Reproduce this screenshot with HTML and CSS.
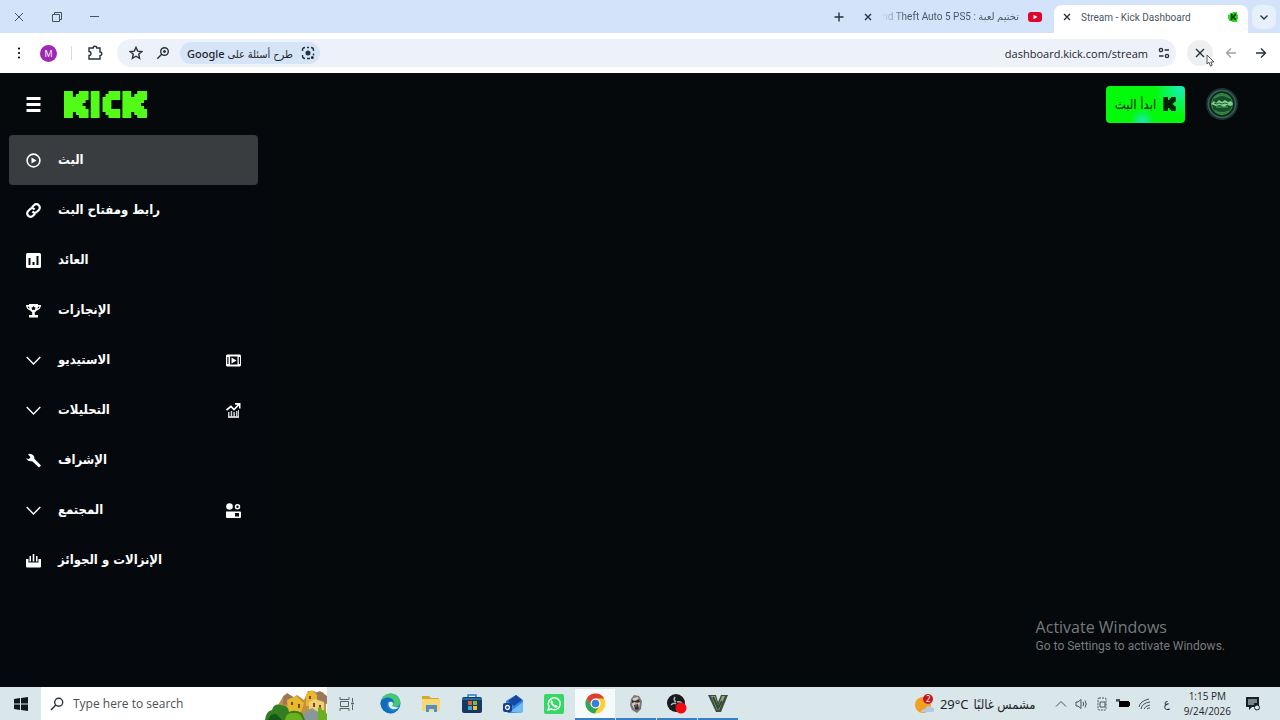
FILE: index.html
```html
<!DOCTYPE html>
<html lang="ar">
<head>
<meta charset="utf-8">
<title>Stream - Kick Dashboard</title>
<link rel="stylesheet" href="styles.css">
</head>
<body>
<div class="tabstrip">
  <div class="window-controls">
    <button class="plain" aria-label="Close window"><svg width="12" height="12" viewBox="0 0 12 12" class="thin"><path d="M2 2l8 8M10 2l-8 8"/></svg></button>
    <button class="plain" aria-label="Restore"><svg width="12" height="12" viewBox="0 0 12 12" class="thin"><path d="M1.500 3.500h7v7h-7zM3.500 3.500v-2h7v7h-2"/></svg></button>
    <button class="plain" aria-label="Minimize"><svg width="12" height="12" viewBox="0 0 12 12" class="thin"><path d="M1 5.500h9"/></svg></button>
  </div>
  <button class="plain new-tab" aria-label="New tab"><svg width="12" height="12" viewBox="0 0 12 12" class="line"><path d="M6 1.500v9M1.500 6h9"/></svg></button>
  <div class="tab">
    <button class="plain" aria-label="Close tab"><svg width="10" height="10" viewBox="0 0 10 10" class="line"><path d="M2 2l6 6M8 2l-6 6"/></svg></button>
    <span class="tab-title fade" dir="rtl">تختيم لعبة : Grand Theft Auto 5 PS5</span>
    <svg width="14" height="10" viewBox="0 0 14 10"><rect width="14" height="10" rx="3" fill="#e0032c"/><path d="M5.500 2.800v4.400L9.500 5z" fill="#fff"/></svg>
  </div>
  <div class="tab active">
    <button class="plain" aria-label="Close tab"><svg width="10" height="10" viewBox="0 0 10 10" class="line"><path d="M2 2l6 6M8 2l-6 6"/></svg></button>
    <span class="tab-title">Stream - Kick Dashboard</span>
    <svg width="10" height="10" viewBox="0 0 11 11"><path d="M5 0h5v3h1v5h-1v3H4v-1H1V8H0V3h2V1h3z" fill="#2fdc20"/><path d="M3 2v7h2V7h1v1h1v1h2V7H8V6H7V5h1V4h1V2H7v1H6v1H5V2z" fill="#073d08"/></svg>
  </div>
  <button class="plain tab-search" aria-label="Search tabs"><svg width="10" height="10" viewBox="0 0 10 10" class="line"><path d="M1.500 3.500L5 7l3.500-3.500"/></svg></button>
</div>

<div class="toolbar">
  <button class="plain menu-dots" aria-label="Menu"><svg width="4" height="14" viewBox="0 0 4 14"><circle cx="2" cy="2.500" r="1.100"/><circle cx="2" cy="7" r="1.100"/><circle cx="2" cy="11.500" r="1.100"/></svg></button>
  <button class="plain profile">M</button>
  <span class="divider"></span>
  <button class="plain extensions" aria-label="Extensions"><svg width="16" height="16" viewBox="0 0 16 16" class="line"><path d="M2 3h4.200a1.800 1.800 0 0 1 3.600 0H13v4a1.800 1.800 0 0 1 0 3.600V14H2v-3.500a2 2 0 0 0 0-4z"/></svg></button>
  <div class="address">
    <button class="plain" aria-label="Bookmark"><svg width="14" height="14" viewBox="0 0 14 14" class="line"><path d="M7 1.300l1.700 3.800 4.100.400-3.100 2.700.9 4.100L7 10.200l-3.600 2.100.9-4.100L1.200 5.500l4.100-.4z"/></svg></button>
    <button class="plain zoom-button" aria-label="Zoom"><svg width="14" height="14" viewBox="0 0 14 14" class="line"><circle cx="8.500" cy="5.500" r="3.800"/><path d="M5.700 8.300L1.300 12.700M8.500 4v3M7 5.500h3"/></svg></button>
    <button class="plain lens"><span dir="rtl">طرح أسئلة على Google</span><svg width="14" height="14" viewBox="0 0 14 14" class="line"><path d="M4 1.500C2.200 1.500 1.500 2.500 1.500 4v1M10 1.500c1.800 0 2.500 1 2.500 2.500v1M4 12.500c-1.800 0-2.500-1-2.500-2.500V9M6 12.500h3M12.500 7.500v2M6 1.500h2"/><circle cx="7" cy="7" r="1.800" fill="#26364c"/><circle cx="11.300" cy="11.500" r=".8" fill="#26364c"/></svg></button>
    <input class="url" type="text" aria-label="Address" value="dashboard.kick.com/stream">
    <button class="plain" aria-label="Site settings"><svg width="12" height="12" viewBox="0 0 12 12" class="line"><circle cx="3" cy="3" r="1.600"/><path d="M6.500 3H11M1 9h4.500"/><circle cx="9" cy="9" r="1.600"/></svg></button>
  </div>
  <button class="plain stop" aria-label="Stop loading"><svg width="12" height="12" viewBox="0 0 12 12" class="line"><path d="M2 2l8 8M10 2l-8 8"/></svg><svg class="pointer" width="9" height="13" viewBox="0 0 9 13"><path d="M1 1v9l2-1.700L4.500 12l1.700-.7L4.800 8H8z" fill="#fff" stroke="#555"/></svg></button>
  <button class="plain forward" aria-label="Forward"><svg width="12" height="12" viewBox="0 0 12 12" class="line"><path d="M11 6H1.500M6 1.500L1.500 6 6 10.500"/></svg></button>
  <button class="plain" aria-label="Back"><svg width="12" height="12" viewBox="0 0 12 12" class="line"><path d="M1 6h9.500M6 1.500L10.500 6 6 10.500"/></svg></button>
</div>

<div class="app">
  <header class="header">
    <button class="plain" aria-label="Toggle menu"><svg width="15" height="15" viewBox="0 0 15 15" fill="#fff"><rect x=".5" y="0" width="14" height="3" rx=".5"/><rect x=".5" y="6" width="14" height="3" rx=".5"/><rect x=".5" y="12" width="14" height="3" rx=".5"/></svg></button>
    <a class="logo" href="#" aria-label="Kick"><svg width="83" height="27" viewBox="0 0 28 9" preserveAspectRatio="none" fill="#53fc18"><path id="block-k" d="M0 0h3v2h1V1h1V0h3.300v3H7.300v1h-1v1h1v1h1v3H5V8H4V7H3v2H0z"/><rect x="9" width="3" height="9"/><path d="M15 0h4v3h-3v3h3v3h-4V8h-1V7h-1V2h1V1h1z"/><use href="#block-k" x="19.700"/></svg></a>
    <button class="go-live"><span dir="rtl">ابدأ البث</span><svg width="13" height="14" viewBox="0 0 8 9" fill="#04210a"><path d="M0 0h3v2h1V1h1V0h3v3H7v1H6v1h1v1h1v3H5V8H4V7H3v2H0z"/></svg></button>
    <button class="plain avatar" aria-label="Account"><svg width="34" height="34" viewBox="0 0 34 34"><circle cx="17" cy="17" r="16" fill="#17352f"/><circle cx="17" cy="17" r="13.500" fill="#13251f" stroke="#3d6053" stroke-width="1.500"/><circle cx="17" cy="17" r="10.500" fill="#174a28" stroke="#2f9150"/><path d="M9 11q8-6 16 0M10 24q7 4 14 0" stroke="#2b8a45" fill="none" stroke-width="2"/><path d="M6 17l3-3 2 2 3-3 3 2 3-2 3 2 3-1 2 3-2 2-4-1-3 2-4-2-4 1z" fill="#85cf8e"/><path d="M9 16l3 1 2-1 3 1 3-1 3 1" stroke="#1c6133" fill="none"/><path d="M11 20h12" stroke="#4da565"/></svg></button>
  </header>
  <div class="content">
    <nav class="sidebar">
      <a class="item selected" href="#"><svg class="icon" viewBox="0 0 15 15"><circle cx="7.500" cy="7.500" r="6.400" fill="none" stroke="#fff" stroke-width="1.600"/><path d="M5.500 4.500v6l5-3z"/></svg><span class="label" dir="rtl">البث</span></a>
      <a class="item" href="#"><svg class="icon" viewBox="0 0 15 15"><g fill="none" stroke="#fff" stroke-width="2.200"><path d="M6 4.200l2-2a3.300 3.300 0 0 1 4.800 4.800L11 8.800a3.300 3.300 0 0 1-4.600-.2"/><path d="M9 10.800l-2 2A3.300 3.300 0 0 1 2.200 8L4 6.200a3.300 3.300 0 0 1 4.600.2"/></g></svg><span class="label" dir="rtl">رابط ومفتاح البث</span></a>
      <a class="item" href="#"><svg class="icon" viewBox="0 0 15 15"><path fill-rule="evenodd" d="M1.500 0h12Q15 0 15 1.500v12q0 1.500-1.500 1.500h-12Q0 15 0 13.500v-12Q0 0 1.500 0zM2.500 5v7h2V5zM6.500 9v3h2V9zM10.500 3v9h2V3z"/></svg><span class="label" dir="rtl">العائد</span></a>
      <a class="item" href="#"><svg class="icon" viewBox="0 0 15 15"><path fill-rule="evenodd" d="M3 1h9v1h3q0 4-4.500 5.800Q9.500 9 8.800 9.300V12H12v2.500H3V12h3.200V9.300Q5.500 9 4.500 7.800 0 6 0 2h3zM1.500 3.700q.5 1.500 2 2.100L3 3.700zM13.500 3.700H12l-.5 2.100q1.500-.6 2-2.100zM7.500 3l-.8 1.300-1.500.4 1 1.200-.1 1.400 1.400-.6 1.400.6-.1-1.400 1-1.200-1.500-.4z"/></svg><span class="label" dir="rtl">الإنجازات</span></a>
      <button class="item"><svg class="icon" viewBox="0 0 15 15"><path d="M.7 4l6.800 7 6.800-7" fill="none" stroke="#fff" stroke-width="1.400"/></svg><span class="label" dir="rtl">الاستيديو</span><svg class="icon" viewBox="0 0 15 15"><path fill-rule="evenodd" d="M1 1.500h13l1 1v10l-1 1H1l-1-1v-10zM4 3.500v8h7.500v-8zM1.300 4v7h1.200V4zM12.800 4v7H14V4z"/><path d="M5.500 4.500v6l5-3z"/></svg></button>
      <button class="item"><svg class="icon" viewBox="0 0 15 15"><path d="M.7 4l6.800 7 6.800-7" fill="none" stroke="#fff" stroke-width="1.400"/></svg><span class="label" dir="rtl">التحليلات</span><svg class="icon" viewBox="0 0 15 15"><path d="M.5 7L5 3.500l3 3 5-5" fill="none" stroke="#fff" stroke-width="1.700"/><path d="M9 0h5.500v5.500H13V2.500L9 1.500z"/><path d="M2 9h1.500v6H2zM4.700 8h1.500v7H4.700zM7.400 9h1.500v6H7.400zM10 8h1.500v7H10zM12 7h1v8h-1zM2 13h11v2H2z" fill="#ccc"/></svg></button>
      <a class="item" href="#"><svg class="icon" viewBox="0 0 15 15"><path d="M2 1.200Q5 0 7.500 2.500q1.200 1.500.8 3.300L15 12.500 13 14.500 6.200 8.200Q2.500 9 0 5.500l2.800.6L4.500 4.300z"/></svg><span class="label" dir="rtl">الإشراف</span></a>
      <button class="item"><svg class="icon" viewBox="0 0 15 15"><path d="M.7 4l6.800 7 6.800-7" fill="none" stroke="#fff" stroke-width="1.400"/></svg><span class="label" dir="rtl">المجتمع</span><svg class="icon" viewBox="0 0 15 15"><circle cx="3.500" cy="3.500" r="3.300"/><circle cx="11.500" cy="3.700" r="2" fill="none" stroke="#fff" stroke-width="1.500"/><path fill-rule="evenodd" d="M0 8.500h14q1 0 1 1v4.500q0 1-1 1H1q-1 0-1-1zM9 10v3.500h4V10z"/></svg></button>
      <a class="item" href="#"><svg class="icon" viewBox="0 0 15 15"><path d="M0 6h2.500v3.500h10V6H15v7.500q0 1-1 1H1q-1 0-1-1zM3.500 3H5v5.500H3.500zM6.700 1h1.600v7.500H6.700zM10 3h1.500v5.500H10z"/></svg><span class="label" dir="rtl">الإنزالات و الجوائز</span></a>
    </nav>
    <main class="main">
      <div class="activation" lang="en"><p class="activation-title">Activate Windows</p><p class="activation-text">Go to Settings to activate Windows.</p></div>
    </main>
  </div>
</div>

<footer class="taskbar">
  <button class="plain start" aria-label="Start"><svg width="14" height="14" viewBox="0 0 14 14" fill="#101820"><path d="M0 2l6-1v5.500H0zM7 .9L14 0v6.500H7zM0 7.500h6V13l-6-1zM7 7.500h7V14l-7-1z"/></svg></button>
  <label class="search">
    <svg width="14" height="14" viewBox="0 0 14 14" class="line"><circle cx="8.700" cy="5.200" r="4"/><path d="M5.800 8L1 13"/></svg>
    <input type="text" placeholder="Type here to search" aria-label="Type here to search">
    <svg width="62" height="30" viewBox="0 0 62 30"><path d="M13 15l6-10 7 4 6-4 7 5 4-9h6l3 2 6-1 3 6v22H20z" fill="#c29040"/><path d="M18 7l4-4 8 5-3 6-9 1zM50 3l5-2 7 5v8l-10-3z" fill="#9c785a"/><path d="M22 10l9-4 8 7-4 12H23zM41 4l6-4 5 5v11H41z" fill="#e8b92f"/><path d="M44 12l6-3 9 3v10H44z" fill="#f1cf7a"/><path d="M40 22l7-4 6 4v8H38z" fill="#8b9698"/><path d="M26 12h2v3h-2zM33 14h2v4h-2zM44 6h2v3h-2zM48 13h2v4h-2zM54 15h2v4h-2z" fill="#774717"/><path d="M0 30q1-9 7-10 2-7 9-5 8 1 8 7 6-3 13 1l3 7z" fill="#317f20"/><path d="M20 30q1-8 8-7 7-2 10 7zM53 30V18q3-3 4 2 3 0 5 4v6z" fill="#69af20"/><path d="M3 30q2-7 8-6l6 6z" fill="#14591a"/></svg>
  </label>
  <button class="plain task-view" aria-label="Task view"><svg width="16" height="14" viewBox="0 0 16 14" fill="none" stroke="#59646a"><path d="M1 0v2.500h9V0M1 14v-2.500h9V14M1.500 4.500h8v5h-8zM13.500 1v4M13.500 8v5"/><path d="M12.500 6h2v1h-2z" fill="#59646a"/></svg></button>
  <div class="apps">
    <button class="task" aria-label="Edge"><svg width="21" height="21" viewBox="0 0 21 21"><circle cx="10.500" cy="10.500" r="10" fill="#1780d2"/><path d="M1 8C3 2 8 0 12 .6c6 .5 9 6 8 10-1 4-6 4-8 3 3-3 0-7-4-7-3 0-5 1-7 1.400z" fill="#44c878"/><path d="M1 8q4-5 9-3 4 1 4 5-3-4-6-1-3 5 2 9 4 2 8-2-3 5-9 4Q2 19 .5 11z" fill="#126cbb"/><path d="M8.500 10q1-2 3.500-1 2 2 0 4 3 2 7 1-3 3-7 2-4-2-3.500-6z" fill="#e4f1f3"/></svg></button>
    <button class="task" aria-label="File Explorer"><svg width="20" height="18" viewBox="0 0 20 18"><path d="M1 1h7l2 2h8v3H1z" fill="#d8a72a"/><path d="M1 4h18v12H1z" fill="#f7d774"/><path d="M5 17v-7h11v7h-3v-3H8v3z" fill="#528ecb"/></svg></button>
    <button class="task" aria-label="Store"><svg width="20" height="20" viewBox="0 0 20 20"><path d="M6 4V1h8v3" fill="none" stroke="#2780c4" stroke-width="1.500"/><rect y="3" width="20" height="16" rx="2" fill="#173961"/><path d="M0 4h20v2H0z" fill="#2368a6"/><path d="M6 7h4v4H6z" fill="#ee5735"/><path d="M11 7h4v4h-4z" fill="#80be32"/><path d="M6 12h4v4H6z" fill="#2ba8e6"/><path d="M11 12h4v4h-4z" fill="#f4bf2b"/></svg></button>
    <button class="task" aria-label="Outlook"><svg width="21" height="20" viewBox="0 0 21 20"><path d="M3 7l10-6 7 5v11l-3 2H5l-2-2z" fill="#3185de"/><path d="M5 7l8-6 6 5-8 6z" fill="#1748a5"/><path d="M7 18l13-10v10l-2 1z" fill="#70bcf2"/><rect y="9" width="9" height="9" rx="2" fill="#123f91"/><circle cx="4.500" cy="13.500" r="2" fill="none" stroke="#fff" stroke-width="1.300"/></svg></button>
    <button class="task" aria-label="WhatsApp"><svg width="20" height="20" viewBox="0 0 20 20"><rect width="20" height="20" rx="2" fill="#35d765"/><path d="M4 16l1-3.500a6 6 0 1 1 2.500 2.500z" fill="none" stroke="#fff" stroke-width="1.400"/><path d="M7.500 6l1.500 2-.7 1 2.500 2.500 1-.8 2 1.500q-1 2-3 1.200Q7 11.500 6.500 8q0-1 1-2z" fill="#fff"/></svg></button>
    <button class="task running current" aria-label="Chrome"><svg width="21" height="21" viewBox="0 0 21 21"><circle cx="10.500" cy="10.500" r="10" fill="#ffce34"/><path d="M1.800 5.500A10 10 0 0 1 19.200 5.500H10.500L6.200 13z" fill="#df3e32"/><path d="M1.800 5.500a10 10 0 0 0 7.700 15L14.500 13l-8.300 0z" fill="#30a653"/><circle cx="10.500" cy="10.500" r="5" fill="#fff"/><circle cx="10.500" cy="10.500" r="3.800" fill="#347fde"/></svg></button>
    <button class="task running" aria-label="Game"><svg width="14" height="18" viewBox="0 0 14 18"><path d="M2 4l3-4 5 1 3 5-1 8-4 4-5-3-2-5z" fill="#777"/><path d="M4 3l5-1 2 5-1 6-4 2-3-5z" fill="#d7c8bd"/><path d="M3 5l3 1 4-2 1 3-3 1-2-1-3 1zM5 10l4-1 1 5-4 1z" fill="#35312f"/><path d="M7 7v5" stroke="#a88168"/></svg></button>
    <button class="task running" aria-label="Recorder"><svg width="20" height="20" viewBox="0 0 20 20"><circle cx="9" cy="9" r="9" fill="#171a1c"/><path d="M8 3q-2 3 1 5M4 11q3-3 5-1M10 8q3-1 5 1" fill="none" stroke="#b5b5b5" stroke-width="1.500"/><circle cx="14" cy="14" r="5.500" fill="#f10b12"/></svg></button>
    <button class="task running" aria-label="Grand Theft Auto V"><svg width="20" height="17" viewBox="0 0 20 17"><path d="M0 0h8l2 7 3-7h7l-7 17H8z" fill="#404945"/><path d="M3 1h4l3 10 4-10h3l-6 14H9z" fill="#87a970"/><path d="M5 2l5 11 4-7" fill="none" stroke="#294e2f" stroke-width="2"/></svg></button>
  </div>
  <button class="plain weather"><svg width="20" height="20" viewBox="0 0 20 20"><circle cx="8" cy="11" r="8" fill="#f2a022"/><path d="M6 18q0-3 4-3 2-5 6-2 3 0 3 3t-3 2z" fill="#b8c8e4"/><circle cx="13" cy="5" r="5" fill="#c61520"/><text x="11" y="8" class="badge-number">2</text></svg><span>29°C</span><span dir="rtl">مشمس غالبًا</span></button>
  <div class="tray">
    <svg width="12" height="12" viewBox="0 0 12 12" class="thin"><path d="M1 8.500l5-5 5 5"/></svg>
    <svg width="13" height="12" viewBox="0 0 13 12" class="thin"><path d="M1 4h2l3-2.500v9L3 8H1zM8 4q1.500 2 0 4M10 2.500q2.500 3.500 0 7"/></svg>
    <svg width="12" height="14" viewBox="0 0 12 14" class="thin"><rect x="2" y="1" width="8" height="12" rx="1" stroke-dasharray="2 1"/><path d="M4 5h5v5H4z"/></svg>
    <svg width="14" height="10" viewBox="0 0 14 10"><path d="M3 2h10v1h1v4h-1v1H3z"/><path d="M0 1h4M1 0v3M3 0v3" stroke="#222"/></svg>
    <svg width="13" height="12" viewBox="0 0 13 12" class="thin"><path d="M1 9Q2 3 11 1M3 11q1-6 9-7M6 11q1-3 6-4M9 11q1-1 3-1"/></svg>
    <button class="plain language">ع</button>
  </div>
  <div class="clock"><time>1:15 PM</time><time>9/24/2026</time></div>
  <button class="plain notifications" aria-label="Notifications"><svg width="14" height="14" viewBox="0 0 14 14"><path d="M0 0h13v10H6l-3 3v-3H0z" fill="#172026"/><path d="M2 3h9M2 5h9M2 7h6" stroke="#dce9ec"/><circle cx="11" cy="10.500" r="2.500" fill="#dce9ec" stroke="#172026"/></svg></button>
</footer>
</body>
</html>
```
FILE: styles.css
```css
* { box-sizing: border-box; }
body {
  margin: 0;
  min-height: 100vh;
  display: flex;
  flex-direction: column;
  background: #05090c;
  font-family: "Open Sans", "Noto Sans", "DejaVu Sans", sans-serif;
  font-size: 12px;
  color: #1f2429;
}
svg { display: block; flex-shrink: 0; }
button, input { font: inherit; color: inherit; }
.plain {
  display: flex;
  align-items: center;
  justify-content: center;
  padding: 0;
  border: 0;
  background: none;
}
.line { fill: none; stroke: #26323d; stroke-width: 1.4; }
.thin { fill: none; stroke: #46525c; stroke-width: 1; }

.tabstrip {
  display: flex;
  align-items: center;
  height: 33px;
  padding-right: 4px;
  background: #d3e3fa;
}
.window-controls { display: flex; gap: 26px; flex: 1; padding-left: 13px; }
.new-tab { width: 24px; height: 24px; }
.tab {
  display: flex;
  align-items: center;
  gap: 9px;
  height: 24px;
  padding: 0 12px;
  font-family: Roboto, "DejaVu Sans", sans-serif;
  font-size: 10px;
  color: #4b5663;
}
.tab-title { width: 137px; overflow: hidden; white-space: nowrap; }
.fade { mask-image: linear-gradient(to right, transparent, #000 24px); }
.active {
  align-self: flex-end;
  height: 28px;
  width: 194px;
  padding: 0 10px 4px 8px;
  border-radius: 8px 8px 0 0;
  background: #fff;
}
.active .tab-title { flex: 1; }
.tab-search { width: 24px; height: 24px; margin-left: 4px; border-radius: 8px; background: #e7effb; }

.toolbar {
  display: flex;
  align-items: center;
  height: 40px;
  padding: 0 13px 0 17px;
  background: #fff;
}
.profile {
  width: 17px;
  height: 17px;
  margin-left: 19px;
  border-radius: 50%;
  background: #a127b5;
  color: #fff;
  font-size: 9px;
}
.divider { width: 1px; height: 14px; margin: 0 15px 0 14px; background: #cfdceb; }
.address {
  display: flex;
  align-items: center;
  flex: 1;
  height: 28px;
  margin: 0 11px 0 14px;
  padding: 0 6px 0 12px;
  border-radius: 14px;
  background: #edf2fa;
}
.zoom-button { margin: 0 10px 0 13px; }
.lens {
  gap: 8px;
  height: 22px;
  padding: 0 5px 0 7px;
  border-radius: 11px;
  background: #d6e4f8;
  font-family: "Noto Sans", "DejaVu Sans Condensed", sans-serif;
  font-size: 11px;
  font-weight: 500;
  white-space: nowrap;
}
.url { flex: 1; min-width: 0; padding: 0 10px; border: 0; background: none; outline: 0; text-align: right; font-size: 11px; }
.stop { position: relative; width: 26px; height: 26px; border-radius: 50%; background: #eeeff1; }
.pointer { position: absolute; left: 19px; top: 14px; }
.forward { margin: 0 18px 0 12px; opacity: 0.45; }

.app { display: flex; flex-direction: column; flex: 1; color: #fff; }
.header { display: flex; align-items: center; height: 62px; padding: 0 41px 0 26px; }
.logo { margin: 0 auto 0 23px; }
.go-live {
  display: flex;
  align-items: center;
  justify-content: center;
  gap: 7px;
  width: 79px;
  height: 37px;
  padding: 0;
  border: 0;
  border-radius: 4px;
  background: radial-gradient(circle at 46% 94%, #17e8b1 0, transparent 12px), radial-gradient(circle at 94% 8%, #17efb4 0, transparent 26px), #03fa0a;
  color: #04210a;
  font-family: "DejaVu Sans Condensed", sans-serif;
  font-size: 13px;
}
.avatar { margin-left: 20px; }
.content { display: flex; flex: 1; }
.sidebar { width: 267px; padding: 0 9px; background: #05090e; }
.item {
  display: flex;
  align-items: center;
  gap: 17px;
  width: 100%;
  height: 50px;
  padding: 0 17px;
  border: 0;
  border-radius: 4px;
  background: none;
  color: #fff;
  text-decoration: none;
  font-family: "DejaVu Sans Condensed", sans-serif;
  font-size: 13px;
  font-weight: 700;
}
.selected { background: #3a3d40; }
.icon { width: 15px; height: 15px; fill: #fff; }
.label { padding-bottom: 2px; margin-right: auto; white-space: nowrap; }
.main { display: flex; flex: 1; align-items: flex-end; justify-content: flex-end; padding: 0 55px 32px 0; }
.activation { color: #777b7d; }
.activation p { margin: 0; }
.activation-title { font-size: 16px; line-height: 22px; }
.activation-text { font-family: Roboto, sans-serif; font-size: 12px; line-height: 17px; }

.taskbar { display: flex; align-items: center; height: 33px; background: #d9e7eb; }
.start { width: 41px; height: 33px; }
.search { display: flex; align-items: flex-end; width: 286px; height: 33px; padding-left: 9px; background: #fff; }
.search > svg:first-child { align-self: center; }
.search input { align-self: center; flex: 1; min-width: 0; padding: 0 0 0 9px; border: 0; background: none; font-size: 12px; outline: 0; }
.search input::placeholder { color: #4c5053; opacity: 1; }
.task-view { width: 40px; height: 33px; }
.apps { display: flex; flex: 1; gap: 1px; padding-left: 3px; }
.task {
  display: grid;
  place-items: center;
  width: 40px;
  height: 33px;
  padding: 0;
  border: solid transparent;
  border-width: 2px 0;
  background: none;
}
.running { border-bottom-color: #397fc4; background-clip: padding-box; }
.current { background-color: #f5fafb; }
.weather { gap: 5px; font-family: "Noto Sans", "DejaVu Sans Condensed", sans-serif; font-size: 13px; white-space: nowrap; }
.badge-number { font-size: 8px; fill: #fff; }
.tray { display: flex; align-items: center; gap: 8px; margin-left: 19px; }
.language { width: 16px; font-family: "DejaVu Sans Condensed", sans-serif; font-size: 11px; }
.clock { display: grid; justify-items: center; margin-left: 9px; font-size: 10px; line-height: 15px; }
.notifications { margin: 0 20px 0 15px; }
```
